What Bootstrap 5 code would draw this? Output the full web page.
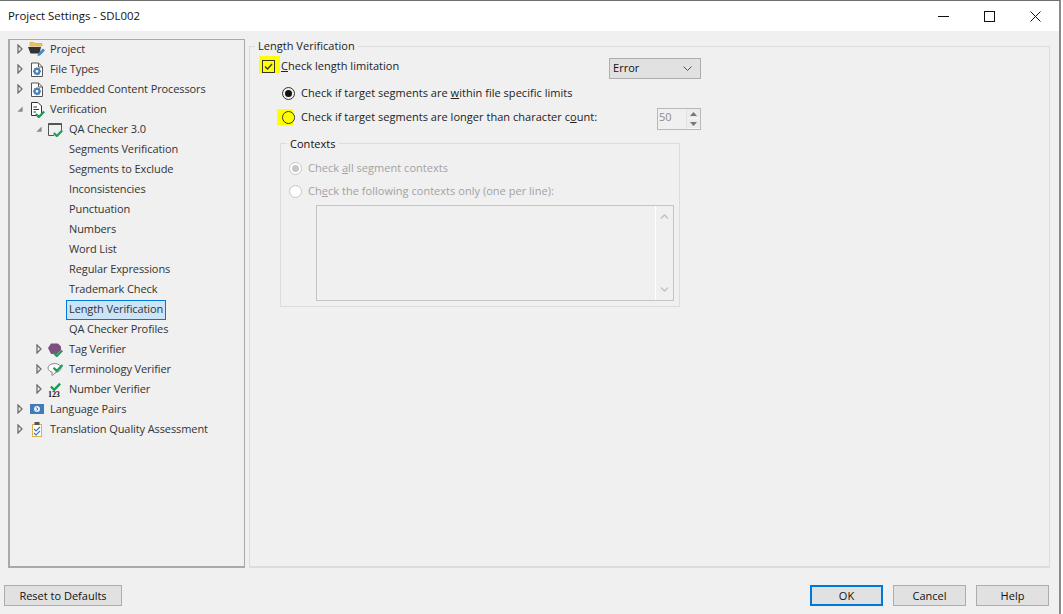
<!DOCTYPE html>
<html lang="en">
<head>
<meta charset="utf-8">
<title>Project Settings - SDL002</title>
<link href="https://cdn.jsdelivr.net/npm/bootstrap@5.3.0/dist/css/bootstrap.min.css" rel="stylesheet">
<style>
html,body{height:100%;margin:0;overflow:hidden;background:#fff;}
body{font-family:"Open Sans","Noto Sans",sans-serif;font-size:11px;color:#333;}
.dlg{width:1061px;height:614px;background:#f0f0f0;border-top:1px solid #6f6f6f;border-right:2px solid #8a8a8a;}
.ttl{height:30px;background:#fff;font-size:11.4px;color:#111;padding:0 1px 0 8px;}
.winbtn{width:46px;height:30px;}
.mainrow{height:531px;padding:8px 9px 0 8px;gap:4px;}
.treepane{width:237px;height:529px;border:1px solid #a9a9a9;border-left-width:2px;border-bottom-width:2px;background:#f0f0f0;letter-spacing:-.1px;}
.trow{height:20px;white-space:nowrap;padding-bottom:2px;}
.l0{padding-left:7px;}
.l1{padding-left:26px;}
.l2{padding-left:59px;}
.arrow{width:6px;flex:none;margin-right:5px;}
.ic{width:17px;height:17px;flex:none;margin-right:5px;}
.sel{background:#cce4f7;border:1px solid #0078d7;padding:0 2px;height:20px;line-height:16px;margin-left:-3px;align-self:flex-start;}
.setpane{flex:1;min-width:0;height:529px;margin:0;padding:0;border:1px solid #dcdcdc;border-bottom-width:2px;letter-spacing:.03px;}
.setpane>legend{float:none;width:auto;font-size:11px;line-height:14px;color:#222;padding:0 3px;margin:0 0 0 5px;}
.r1{height:28px;padding:0 0 2px 9px;color:#222;}
.yel-box{width:21px;height:17px;background:#ffff00;flex:none;margin:-4px 1px 0 0;padding-left:3px;}
.chk{width:13px;height:13px;flex:none;}
.r2{height:24px;padding-left:32px;color:#222;}
.radio{width:13px;height:13px;border-radius:50%;border:1px solid #333;background:#f0f0f0;flex:none;}
.radio.on{margin-right:6px;}
.radio.on::after{content:"";width:7px;height:7px;border-radius:50%;background:#111;}
.yel-radio{width:16px;height:16px;background:#ffff00;margin:-1px 8px 0 -5px;flex:none;}
.yel-radio .radio{background:transparent;margin-right:-2px;margin-top:1px;}
.cselect{width:92px;height:21px;background:#e1e1e1;border:1px solid #adadad;margin:4px 0 0 auto;padding:1px 8px 0 3px;color:#111;}
.limit{width:451px;}
.spin{width:44px;height:22px;margin:4px 0 0 auto;border:1px solid #b8b8b8;color:#8c8c8c;padding-left:1px;background:#f0f0f0;}
.spin>span{padding-bottom:3px;}
.spinb{width:14px;height:100%;border-left:1px solid #e4e4e4;margin-left:auto;}
.spinb div{height:50%;background:#ececec;border-bottom:1px solid #f8f8f8;}
.ctx{width:400px;height:171px;margin:7px 0 0 30px;border:1px solid #dcdcdc;padding:6px 0 0;min-width:0;}
.ctx legend{float:none;width:auto;font-size:11px;color:#111;padding:0 3px;margin:0 0 0 6px;line-height:15px;}
.cr{height:23px;padding-left:8px;color:#a2a2a2;}
.radio.dis{border-color:#c6c6c6;background:#fff;margin-right:6px;}
.radio.dis.on::after{background:#c6c6c6;}
.ta{width:358px;height:96px;margin:2px 0 0 35px;border:1px solid #c4c4c4;}
.tsb{width:18px;border-left:1px solid #fff;margin-left:auto;}
.foot{height:52px;padding:23px 0 0 4px;}
.wbtn{width:118px;height:21px;padding:0;background:#e1e1e1;border:1px solid #adadad;border-radius:0;font-size:11px;color:#111;line-height:19px;}
.wbtn.okb{width:73px;border:2px solid #0078d7;line-height:17px;}
.wbtn.s{width:73px;}
.rbtns{gap:10px;margin-right:10px;}
.wbtn:hover{background:#e1e1e1;color:#111;}
</style>
</head>
<body>
<svg width="0" height="0" class="d-block" aria-hidden="true">
<defs>
<symbol id="ck" viewBox="0 0 10 8"><path d="M.8 4 3.8 7 9.2 1.4" fill="none" stroke="#1f9b5a" stroke-width="2.2"/></symbol>
<symbol id="ar" viewBox="0 0 6 10"><path d="M1 1 5 5 1 9Z" fill="#f0f0f0" stroke="#6f6f6f" stroke-width="1.3"/></symbol>
<symbol id="ad" viewBox="0 0 8 8"><path d="M7.5.5V7.5H.5Z" fill="#8a8a8a"/></symbol>
<symbol id="doc" viewBox="0 0 17 17"><path d="M3.5 2H10.5L14.5 6V15.5H3.5Z" fill="#fff" stroke="#555"/><path d="M10.5 2V6H14.5" fill="none" stroke="#555"/><circle cx="9" cy="10.3" r="2.5" fill="none" stroke="#4a7fb8" stroke-width="2.2"/><path d="M9 6.3V7.6M9 13V14.3M5 10.3H6.3M11.7 10.3H13M6.2 7.5 7 8.3M11 12.3 11.8 13.1M11.8 7.5 11 8.3M7 12.3 6.2 13.1" stroke="#4a7fb8" stroke-width="1.2"/></symbol>
</defs>
</svg>
<div class="dlg d-flex flex-column">
  <div class="ttl d-flex align-items-center">
    <span>Project Settings - SDL002</span>
    <div class="d-flex ms-auto">
      <div class="winbtn d-flex align-items-center justify-content-center"><svg width="11" height="11" viewBox="0 0 11 11"><path d="M0 5.5H11" stroke="#111"/></svg></div>
      <div class="winbtn d-flex align-items-center justify-content-center"><svg width="11" height="11" viewBox="0 0 11 11"><rect x=".5" y=".5" width="10" height="10" fill="none" stroke="#111"/></svg></div>
      <div class="winbtn d-flex align-items-center justify-content-center"><svg width="11" height="11" viewBox="0 0 11 11"><path d="M.5.5 10.5 10.5M10.5.5.5 10.5" stroke="#111"/></svg></div>
    </div>
  </div>
  <div class="mainrow d-flex">
    <div class="treepane">
      <div class="trow d-flex align-items-center l0"><svg class="arrow" height="10"><use href="#ar"/></svg><svg class="ic" viewBox="0 0 17 17"><path d="M2 5V1.5H6L7 2.5H14V5Z" fill="#f2c35a" stroke="#d9a441" stroke-width=".7"/><path d="M0 6H13L11.5 12.5H2.5Z" fill="#333"/><path d="M9.5 15 10 12.5 15 7.5 17 9.5 12 14.5Z" fill="#4a86c5"/></svg><span>Project</span></div>
      <div class="trow d-flex align-items-center l0"><svg class="arrow" height="10"><use href="#ar"/></svg><svg class="ic"><use href="#doc"/></svg><span>File Types</span></div>
      <div class="trow d-flex align-items-center l0"><svg class="arrow" height="10"><use href="#ar"/></svg><svg class="ic"><use href="#doc"/></svg><span>Embedded Content Processors</span></div>
      <div class="trow d-flex align-items-center l0"><svg class="arrow" height="8"><use href="#ad"/></svg><svg class="ic" viewBox="0 0 17 17"><path d="M3.5 1.5H10L13.5 5V14.5H3.5Z" fill="#fff" stroke="#333"/><path d="M5.5 6H9M5.5 8.5H11M5.5 11H8" stroke="#333"/><use href="#ck" x="7" y="9" width="10" height="8"/></svg><span>Verification</span></div>
      <div class="trow d-flex align-items-center l1"><svg class="arrow" height="8"><use href="#ad"/></svg><svg class="ic" viewBox="0 0 17 17"><path d="M1.5 14.5V2.5H14.5V9M1.5 14.5H7" fill="none" stroke="#555"/><path d="M1.5 3H14.5" stroke="#555" stroke-width="2"/><use href="#ck" x="6" y="8" width="10" height="8"/></svg><span>QA Checker 3.0</span></div>
      <div class="trow d-flex align-items-center l2"><span>Segments Verification</span></div>
      <div class="trow d-flex align-items-center l2"><span>Segments to Exclude</span></div>
      <div class="trow d-flex align-items-center l2"><span>Inconsistencies</span></div>
      <div class="trow d-flex align-items-center l2"><span>Punctuation</span></div>
      <div class="trow d-flex align-items-center l2"><span>Numbers</span></div>
      <div class="trow d-flex align-items-center l2"><span>Word List</span></div>
      <div class="trow d-flex align-items-center l2"><span>Regular Expressions</span></div>
      <div class="trow d-flex align-items-center l2"><span>Trademark Check</span></div>
      <div class="trow d-flex align-items-center l2"><span class="sel">Length Verification</span></div>
      <div class="trow d-flex align-items-center l2"><span>QA Checker Profiles</span></div>
      <div class="trow d-flex align-items-center l1"><svg class="arrow" height="10"><use href="#ar"/></svg><svg class="ic" viewBox="0 0 17 17"><path d="M1 7 4 2.5H11L14 5.5V9L10 13H4Z" fill="#7d4f7f"/><use href="#ck" x="6" y="8" width="10" height="8"/></svg><span>Tag Verifier</span></div>
      <div class="trow d-flex align-items-center l1"><svg class="arrow" height="10"><use href="#ar"/></svg><svg class="ic" viewBox="0 0 17 17"><ellipse cx="7.5" cy="7" rx="6.5" ry="4.5" fill="#fff" stroke="#888"/><path d="M5 11 5 14.5 9 11.5" fill="#fff" stroke="#888"/><use href="#ck" x="5.5" y="2.5" width="11" height="8.5"/></svg><span>Terminology Verifier</span></div>
      <div class="trow d-flex align-items-center l1"><svg class="arrow" height="10"><use href="#ar"/></svg><svg class="ic" viewBox="0 0 17 17"><use href="#ck" x="3" y="1" width="11" height="9"/><text x="1" y="16" font-family="Liberation Serif,serif" font-size="8" font-weight="700" fill="#111">123</text></svg><span>Number Verifier</span></div>
      <div class="trow d-flex align-items-center l0"><svg class="arrow" height="10"><use href="#ar"/></svg><svg class="ic" viewBox="0 0 17 17"><rect x="2" y="3" width="14" height="10" fill="#3f7cb8"/><circle cx="9" cy="8" r="3" fill="#e8f0f8"/><path d="M8 6.5 10 8 8.5 9.5" stroke="#3f7cb8" fill="none"/></svg><span>Language Pairs</span></div>
      <div class="trow d-flex align-items-center l0"><svg class="arrow" height="10"><use href="#ar"/></svg><svg class="ic" viewBox="0 0 17 17"><rect x="4.5" y="3.5" width="9" height="12" fill="#fff" stroke="#e2b04a"/><rect x="6.5" y="1" width="5" height="3" fill="#555"/><path d="M6 8 8 10 12 6M6 12 8 14 12 10" fill="none" stroke="#3f7cb8" stroke-width="1.2"/></svg><span>Translation Quality Assessment</span></div>
    </div>
    <fieldset class="setpane">
      <legend>Length Verification</legend>
      <div class="r1 d-flex align-items-center limit">
        <div class="yel-box d-flex align-items-end"><svg class="chk" viewBox="0 0 13 13"><rect x=".5" y=".5" width="12" height="12" fill="none" stroke="#333"/><path d="M3 6.5 5.5 9 10 4" fill="none" stroke="#333" stroke-width="1.3"/></svg></div>
        <span><u>C</u>heck length limitation</span>
        <div class="cselect d-flex align-items-center justify-content-between"><span>Error</span><svg width="9" height="5" viewBox="0 0 9 5"><path d="M.5.5 4.5 4.5 8.5.5" fill="none" stroke="#555"/></svg></div>
      </div>
      <div class="r2 d-flex align-items-center limit"><div class="radio on d-flex align-items-center justify-content-center"></div><span>Check if target segments are <u>w</u>ithin file specific limits</span></div>
      <div class="r2 d-flex align-items-center limit">
        <div class="yel-radio d-flex align-items-center justify-content-end"><div class="radio"></div></div>
        <span>Check if target segments are longer than character c<u>o</u>unt:</span>
        <div class="spin d-flex align-items-center"><span>50</span><div class="spinb"><div class="d-flex align-items-center justify-content-center"><svg width="7" height="4" viewBox="0 0 7 4"><path d="M0 4 3.5 0 7 4Z" fill="#777"/></svg></div><div class="d-flex align-items-center justify-content-center"><svg width="7" height="4" viewBox="0 0 7 4"><path d="M0 0 3.5 4 7 0Z" fill="#777"/></svg></div></div></div>
      </div>
      <fieldset class="ctx" disabled>
        <legend>Contexts</legend>
        <div class="cr d-flex align-items-center"><div class="radio dis on d-flex align-items-center justify-content-center"></div><span>Check <u>a</u>ll segment contexts</span></div>
        <div class="cr d-flex align-items-center"><div class="radio dis"></div><span>Ch<u>e</u>ck the following contexts only (one per line):</span></div>
        <div class="ta d-flex"><div class="tsb d-flex flex-column justify-content-between align-items-center py-2"><svg width="9" height="5" viewBox="0 0 9 5"><path d="M1 4.5 4.5 1 8 4.5" fill="none" stroke="#c0c0c0" stroke-width="1.3"/></svg><svg width="9" height="5" viewBox="0 0 9 5"><path d="M1 .5 4.5 4 8 .5" fill="none" stroke="#c0c0c0" stroke-width="1.3"/></svg></div></div>
      </fieldset>
    </fieldset>
  </div>
  <div class="foot d-flex">
    <button type="button" class="btn wbtn">Reset to Defaults</button>
    <div class="rbtns d-flex ms-auto">
      <button type="button" class="btn wbtn okb">OK</button>
      <button type="button" class="btn wbtn s">Cancel</button>
      <button type="button" class="btn wbtn s">Help</button>
    </div>
  </div>
</div>
</body>
</html>
